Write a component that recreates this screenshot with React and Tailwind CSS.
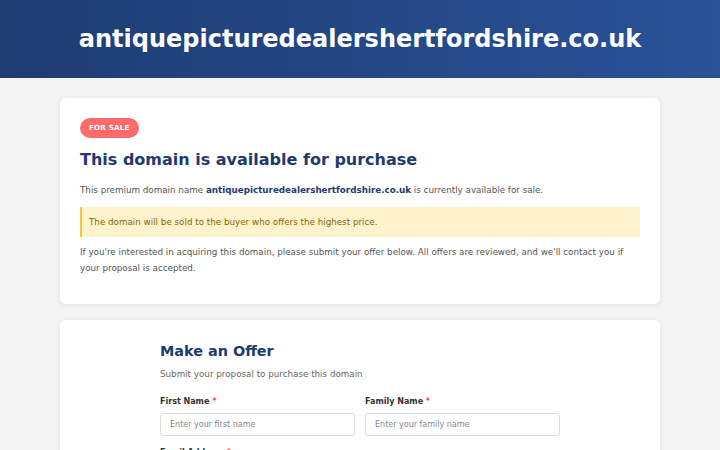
export default function App() {
  const font = { fontFamily: '"DejaVu Sans", Verdana, sans-serif' };
  return (
    <div className="min-h-[450px] bg-[#f4f4f4]" style={font}>
      <header className="h-[78px] bg-gradient-to-r from-[#1e3c72] to-[#2a5298] flex items-center justify-center">
        <h1 className="text-white font-bold text-[24px] leading-none">antiquepicturedealershertfordshire.co.uk</h1>
      </header>
      <main className="px-[60px] pt-[20px] pb-[20px]">
        <section className="bg-white rounded-[6px] shadow-[0_1px_6px_rgba(0,0,0,0.08)] px-[20px] pt-[20px] pb-[28px]">
          <div className="flex">
            <span className="block h-[20px] px-[9px] leading-[20px] rounded-full bg-[#ff6b6b] text-white text-[7px] font-bold tracking-[0.3px]">FOR SALE</span>
          </div>
          <h2 className="mt-[12px] text-[16px] leading-[20px] font-bold text-[#1e3a6e]">This domain is available for purchase</h2>
          <p className="mt-[12px] text-[8.75px] leading-[16px] text-[#555]">
            This premium domain name <strong className="text-[#1e3a6e] font-bold">antiquepicturedealershertfordshire.co.uk</strong> is currently available for sale.
          </p>
          <div className="mt-[9px] bg-[#fff3cd] border-l-[2px] border-[#f5c542] px-[7px] py-[7px] text-[8.75px] leading-[16px] text-[#856404]">
            The domain will be sold to the buyer who offers the highest price.
          </div>
          <p className="mt-[7px] text-[8.75px] leading-[16px] text-[#555]">
            If you're interested in acquiring this domain, please submit your offer below. All offers are reviewed, and we'll contact you if your proposal is accepted.
          </p>
        </section>
        <section className="mt-[16px] bg-white rounded-[6px] shadow-[0_1px_6px_rgba(0,0,0,0.08)] pt-[22px] pb-[30px]">
          <div className="w-[400px] mx-auto">
            <h2 className="text-[14.4px] leading-[18px] font-bold text-[#1e3a6e]">Make an Offer</h2>
            <p className="mt-[6px] text-[8.75px] leading-[16px] text-[#666]">Submit your proposal to purchase this domain</p>
            <div className="mt-[13px] grid grid-cols-2 gap-x-[10px]">
              <div>
                <label className="block text-[8px] leading-[14px] font-bold text-[#333]">First Name <span className="text-[#e05555]">*</span></label>
                <input className="mt-[4px] w-full h-[23px] border border-[#dddddd] rounded-[3px] px-[9px] text-[8px] placeholder:text-[#888] outline-none" placeholder="Enter your first name" style={font} />
              </div>
              <div>
                <label className="block text-[8px] leading-[14px] font-bold text-[#333]">Family Name <span className="text-[#e05555]">*</span></label>
                <input className="mt-[4px] w-full h-[23px] border border-[#dddddd] rounded-[3px] px-[9px] text-[8px] placeholder:text-[#888] outline-none" placeholder="Enter your family name" style={font} />
              </div>
            </div>
            <div className="mt-[10px]">
              <label className="block text-[8px] leading-[14px] font-bold text-[#333]">Email Address <span className="text-[#e05555]">*</span></label>
              <input className="mt-[4px] w-full h-[23px] border border-[#dddddd] rounded-[3px] px-[9px] text-[8px] placeholder:text-[#888] outline-none" placeholder="Enter your email address" style={font} />
            </div>
          </div>
        </section>
      </main>
    </div>
  );
}
